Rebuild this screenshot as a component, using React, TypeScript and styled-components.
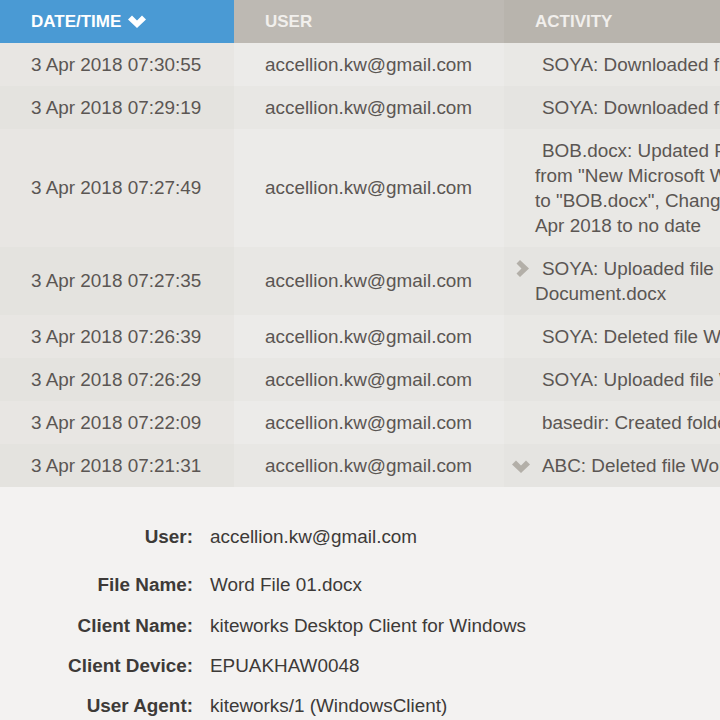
import React from 'react'
import styled, { createGlobalStyle } from 'styled-components'

const rows = [
  { date: '3 Apr 2018 07:30:55', lines: ['SOYA: Downloaded file Word File 01.docx'] },
  { date: '3 Apr 2018 07:29:19', lines: ['SOYA: Downloaded file Word File 01.docx'] },
  {
    date: '3 Apr 2018 07:27:49',
    lines: ['BOB.docx: Updated File Name', 'from "New Microsoft Word Document.docx"', 'to "BOB.docx", Changed expiration from 3', 'Apr 2018 to no date'],
  },
  { date: '3 Apr 2018 07:27:35', lines: ['SOYA: Uploaded file New Microsoft Word', 'Document.docx'], toggle: 'right' },
  { date: '3 Apr 2018 07:26:39', lines: ['SOYA: Deleted file Word File 02.docx'] },
  { date: '3 Apr 2018 07:26:29', lines: ['SOYA: Uploaded file Word File 02.docx'] },
  { date: '3 Apr 2018 07:22:09', lines: ['basedir: Created folder SOYA'] },
  { date: '3 Apr 2018 07:21:31', lines: ['ABC: Deleted file Word File 01.docx'], toggle: 'down' },
]

const details = [
  { label: 'User:', value: 'accellion.kw@gmail.com', space: 22 },
  { label: 'File Name:', value: 'Word File 01.docx', space: 15 },
  { label: 'Client Name:', value: 'kiteworks Desktop Client for Windows', space: 14 },
  { label: 'Client Device:', value: 'EPUAKHAW0048', space: 14 },
  { label: 'User Agent:', value: 'kiteworks/1 (WindowsClient)', space: 14 },
]

const ChevronDown = ({ color }: { color: string }) => (
  <svg width={18} height={13} viewBox="0 0 18 13">
    <path d="M0 4.5 L4 0.5 L9 5.5 L14 0.5 L18 4.5 L9 13 Z" fill={color} />
  </svg>
)

const ChevronRight = ({ color }: { color: string }) => (
  <svg width={13} height={17} viewBox="0 0 13 17">
    <path d="M0.5 3.5 L4 0 L13 8.5 L4 17 L0.5 13.5 L5.5 8.5 Z" fill={color} />
  </svg>
)

const App: React.FC = () => (
  <>
    <GlobalStyle />
    <Page>
      <Table>
        <HeaderRow>
          <DateHead>
            DATE/TIME
            <ChevronDown color="#ffffff" />
          </DateHead>
          <UserHead>USER</UserHead>
          <ActivityHead>ACTIVITY</ActivityHead>
        </HeaderRow>
        {rows.map((row, i) => (
          <Row key={row.date}>
            <DateCell even={i % 2 === 1}>{row.date}</DateCell>
            <UserCell even={i % 2 === 1}>accellion.kw@gmail.com</UserCell>
            <ActivityCell even={i % 2 === 1}>
              {row.toggle === 'right' && (
                <RightToggle>
                  <ChevronRight color="#b3afa8" />
                </RightToggle>
              )}
              {row.toggle === 'down' && (
                <DownToggle>
                  <ChevronDown color="#b3afa8" />
                </DownToggle>
              )}
              {row.lines.map((line, n) => (
                <Line key={line} indent={n === 0}>
                  {line}
                </Line>
              ))}
            </ActivityCell>
          </Row>
        ))}
      </Table>
      <Details>
        {details.map((d) => (
          <DetailRow key={d.label} space={d.space}>
            <Label>{d.label}</Label>
            <Value>{d.value}</Value>
          </DetailRow>
        ))}
      </Details>
    </Page>
  </>
)

export default App

const GlobalStyle = createGlobalStyle`
  html, body {
    margin: 0;
    padding: 0;
    width: 720px;
    height: 720px;
    overflow: hidden;
    background: #f3f2f1;
  }
`

const Page = styled.div`
  width: 720px;
  height: 720px;
  overflow: hidden;
  font-family: "Liberation Sans", Arial, sans-serif;
  font-size: 18.9px;
  color: #5b5653;
`

const Table = styled.div`
  width: 720px;
`

const HeaderRow = styled.div`
  display: grid;
  grid-template-columns: 234px 270px 216px;
  height: 43px;
  font-size: 17px;
  font-weight: bold;
  color: #f1efec;
`

const HeadCell = styled.div`
  display: flex;
  align-items: center;
  padding-left: 31px;
  white-space: nowrap;
`

const DateHead = styled(HeadCell)`
  gap: 7px;
  background: #4a9ad4;
  color: #ffffff;
`

const UserHead = styled(HeadCell)`
  background: #bdb9b3;
`

const ActivityHead = styled(HeadCell)`
  background: #b8b4ad;
`

const Row = styled.div`
  display: grid;
  grid-template-columns: 234px 270px 216px;
`

const DateCell = styled.div<{ even: boolean }>`
  display: flex;
  align-items: center;
  padding-left: 31px;
  background: ${(props) => (props.even ? '#e4e3df' : '#e8e6e3')};
  white-space: nowrap;
`

const UserCell = styled.div<{ even: boolean }>`
  display: flex;
  align-items: center;
  padding-left: 31px;
  background: ${(props) => (props.even ? '#e8e7e4' : '#ecebe9')};
  white-space: nowrap;
`

const ActivityCell = styled.div<{ even: boolean }>`
  position: relative;
  padding: 9px 0 9px 31px;
  line-height: 25px;
  background: ${(props) => (props.even ? '#e5e4e1' : '#e9e8e5')};
  overflow: hidden;
  white-space: nowrap;
`

const Line = styled.div<{ indent: boolean }>`
  padding-left: ${(props) => (props.indent ? '7px' : '0')};
`

const RightToggle = styled.span`
  position: absolute;
  left: 12px;
  top: 13px;
  display: flex;
`

const DownToggle = styled.span`
  position: absolute;
  left: 8px;
  top: 16px;
  display: flex;
`

const Details = styled.div`
  padding-top: 37px;
`

const DetailRow = styled.div<{ space: number }>`
  display: grid;
  grid-template-columns: 193px 1fr;
  column-gap: 17px;
  height: 26px;
  line-height: 26px;
  margin-bottom: ${(props) => props.space + 'px'};
`

const Label = styled.div`
  text-align: right;
  font-weight: bold;
  color: #3d3a38;
`

const Value = styled.div`
  color: #3d3a38;
  white-space: nowrap;
`
